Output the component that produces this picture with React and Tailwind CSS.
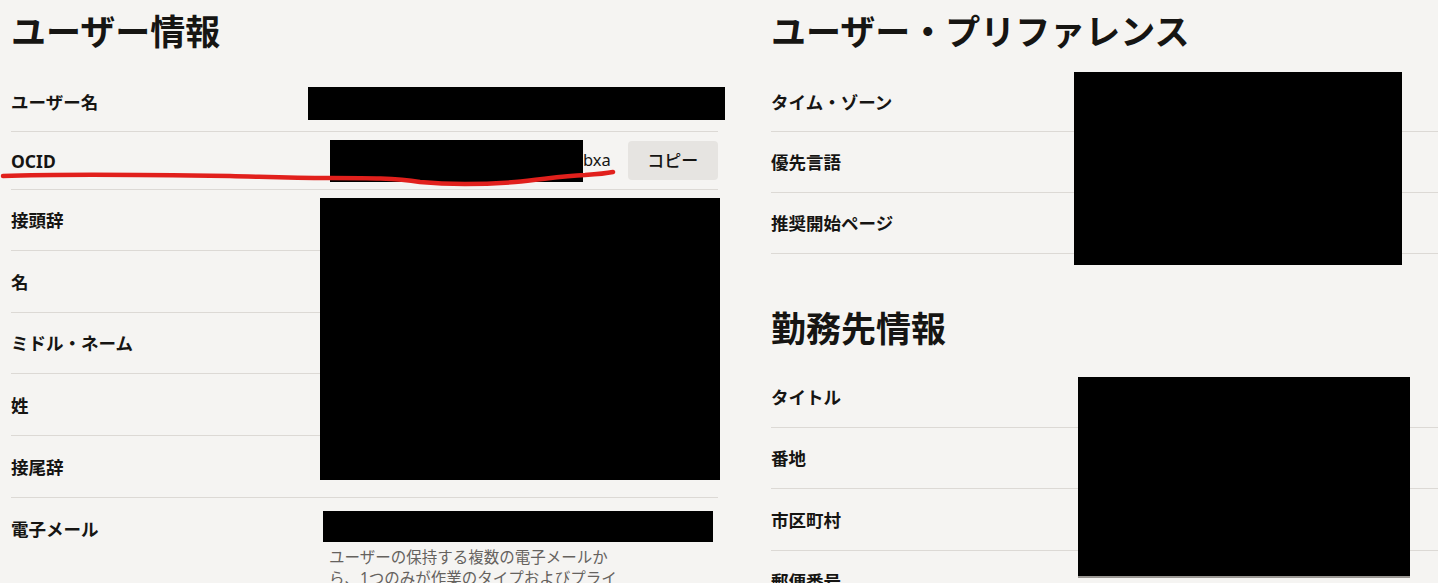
import React from 'react';

const Label = ({ children }) => (
    <div className="w-[297px] shrink-0 text-[17.5px] font-bold leading-[24px] text-[#161513]">{children}</div>
);

const Row = ({ h, border = true, className = '', children }) => (
    <div className={`flex items-center ${h} ${border ? 'border-b border-[#dcd9d5]' : ''} ${className}`}>
        {children}
    </div>
);

const Heading = ({ children, className = '' }) => (
    <h2 className={`text-[35px] font-bold leading-[44px] text-[#161513] ${className}`}>{children}</h2>
);

const App = () => {
    return (
        <div className="relative h-screen w-full overflow-hidden bg-[#f5f4f2] font-['Noto_Sans','Noto_Sans_CJK_JP',sans-serif] text-[#161513]">
            <div className="flex pl-[11px]">
                {/* ユーザー情報 */}
                <div className="relative w-[707px] shrink-0">
                    <div className="h-[72px] pt-[10px]">
                        <Heading>ユーザー情報</Heading>
                    </div>
                    <Row h="h-[60px]">
                        <Label>ユーザー名</Label>
                        <div className="mt-[3px] h-[33px] w-[417px] shrink-0 bg-black" />
                    </Row>
                    <Row h="h-[58px]">
                        <Label>OCID</Label>
                        <div className="ml-[22px] flex shrink-0 items-center">
                            <div className="h-[42px] w-[253px] bg-black" />
                            <span className="text-[16.5px] leading-none">bxa</span>
                        </div>
                        <button className="ml-[17px] h-[39px] w-[90px] shrink-0 rounded-[4px] bg-[#e6e4e1] text-[17px] font-medium">
                            コピー
                        </button>
                    </Row>
                    <Row h="h-[61px]"><Label>接頭辞</Label></Row>
                    <Row h="h-[62px]"><Label>名</Label></Row>
                    <Row h="h-[61px]"><Label>ミドル・ネーム</Label></Row>
                    <Row h="h-[62px]"><Label>姓</Label></Row>
                    <Row h="h-[62px]"><Label>接尾辞</Label></Row>
                    <div className="flex items-start pt-[19px]">
                        <Label>電子メール</Label>
                        <div className="-mt-[6px] ml-[15px]">
                            <div className="h-[31px] w-[390px] bg-black" />
                            <p className="ml-[6px] mt-[5px] w-[291px] text-[15.5px] leading-[21px] text-[#65625e]">
                                ユーザーの保持する複数の電子メールから、1つのみが作業のタイプおよびプライマリとしてマークされます。
                            </p>
                        </div>
                    </div>
                    {/* redacted values */}
                    <div className="absolute left-[309px] top-[198px] h-[282px] w-[400px] bg-black" />
                </div>

                {/* 右カラム */}
                <div className="relative ml-[53px] flex-1">
                    <div className="h-[72px] pt-[10px]">
                        <Heading>ユーザー・プリファレンス</Heading>
                    </div>
                    <Row h="h-[60px]"><Label>タイム・ゾーン</Label></Row>
                    <Row h="h-[61px]"><Label>優先言語</Label></Row>
                    <Row h="h-[61px]"><Label>推奨開始ページ</Label></Row>
                    <div className="h-[113px] pt-[53px]">
                        <Heading>勤務先情報</Heading>
                    </div>
                    <Row h="h-[61px]"><Label>タイトル</Label></Row>
                    <Row h="h-[61px]"><Label>番地</Label></Row>
                    <Row h="h-[62px]"><Label>市区町村</Label></Row>
                    <Row h="h-[61px]"><Label>郵便番号</Label></Row>

                    <div className="absolute left-[303px] top-[72px] h-[193px] w-[328px] bg-black" />
                    <div className="absolute left-[307px] top-[377px] h-[201px] w-[332px] border-b-2 border-[#9b9894] bg-black" />
                </div>
            </div>

            {/* hand-drawn red marker */}
            <svg className="pointer-events-none absolute left-0 top-0" width="1438" height="583" viewBox="0 0 1438 583">
                <path
                    d="M3 176 C 60 174, 160 175, 230 176 C 270 177, 290 178, 330 178 C 370 178, 395 178, 420 182 C 450 185, 490 184, 515 182 C 540 180, 560 176, 585 175 C 600 174, 608 173, 613 172"
                    fill="none"
                    stroke="#e1201c"
                    strokeWidth="4.5"
                    strokeLinecap="round"
                    strokeLinejoin="round"
                />
            </svg>
        </div>
    );
};

export default App;
